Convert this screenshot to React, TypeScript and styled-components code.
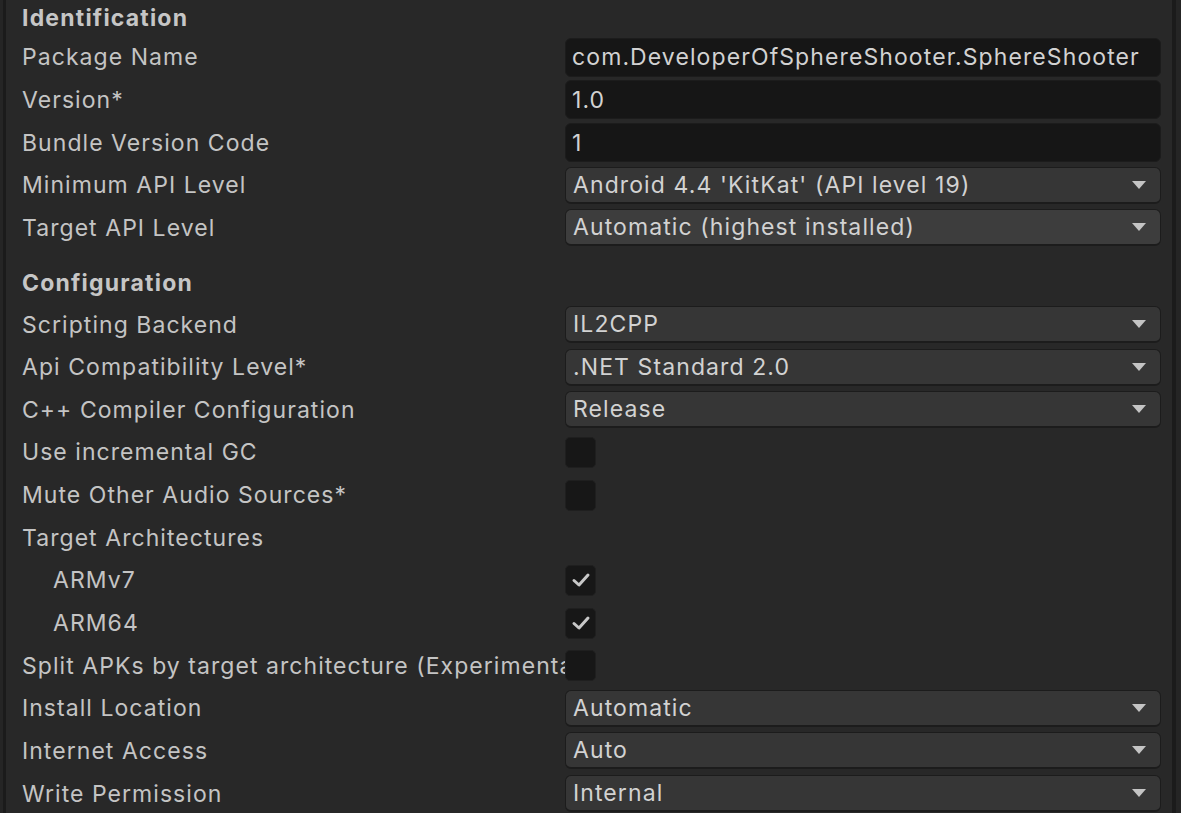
import React from 'react';
import styled, { createGlobalStyle } from 'styled-components';

const GlobalStyle = createGlobalStyle`
  html, body {
    margin: 0;
    padding: 0;
    background: #252525;
    overflow: hidden;
  }
  body {
    font-family: Inter, "Noto Sans", "Liberation Sans", sans-serif;
  }
`;

type Field =
  | { kind: 'header'; label: string }
  | { kind: 'text'; label: string; value: string }
  | { kind: 'select'; label: string; value: string; hover?: boolean }
  | { kind: 'check'; label: string; checked?: boolean; indent?: boolean }
  | { kind: 'label'; label: string };

const fields: Field[] = [
  { kind: 'header', label: 'Identification' },
  { kind: 'text', label: 'Package Name', value: 'com.DeveloperOfSphereShooter.SphereShooter' },
  { kind: 'text', label: 'Version*', value: '1.0' },
  { kind: 'text', label: 'Bundle Version Code', value: '1' },
  { kind: 'select', label: 'Minimum API Level', value: "Android 4.4 'KitKat' (API level 19)" },
  { kind: 'select', label: 'Target API Level', value: 'Automatic (highest installed)', hover: true },
  { kind: 'header', label: 'Configuration' },
  { kind: 'select', label: 'Scripting Backend', value: 'IL2CPP' },
  { kind: 'select', label: 'Api Compatibility Level*', value: '.NET Standard 2.0' },
  { kind: 'select', label: 'C++ Compiler Configuration', value: 'Release' },
  { kind: 'check', label: 'Use incremental GC' },
  { kind: 'check', label: 'Mute Other Audio Sources*' },
  { kind: 'label', label: 'Target Architectures' },
  { kind: 'check', label: 'ARMv7', checked: true, indent: true },
  { kind: 'check', label: 'ARM64', checked: true, indent: true },
  { kind: 'check', label: 'Split APKs by target architecture (Experimental)' },
  { kind: 'select', label: 'Install Location', value: 'Automatic' },
  { kind: 'select', label: 'Internet Access', value: 'Auto' },
  { kind: 'select', label: 'Write Permission', value: 'Internal' },
];

const Arrow = () => (
  <svg width="16" height="10" viewBox="0 0 16 10">
    <path d="M1 1 H15 L8 9 Z" fill="#c4c4c4" />
  </svg>
);

const Check = () => (
  <svg width="22" height="22" viewBox="0 0 22 22">
    <path d="M4 11.5 L9 16 L18 6" fill="none" stroke="#c8c8c8" strokeWidth="3" strokeLinecap="round" strokeLinejoin="round" />
  </svg>
);

const App = () => {
  let headerCount = 0;
  return (
    <>
      <GlobalStyle />
      <Window>
        <LeftEdge />
        <Inspector>
          {fields.map((f, i) => {
            if (f.kind === 'header') {
              const first = headerCount++ === 0;
              return (
                <Header key={i} $first={first}>
                  {f.label}
                </Header>
              );
            }
            return (
              <Row key={i}>
                <Label $indent={f.kind === 'check' && f.indent}>{f.label}</Label>
                {f.kind === 'text' && (
                  <TextField>
                    <Value>{f.value}</Value>
                  </TextField>
                )}
                {f.kind === 'select' && (
                  <Select $hover={f.hover}>
                    <Value>{f.value}</Value>
                    <Arrow />
                  </Select>
                )}
                {f.kind === 'check' && <CheckBox>{f.checked && <Check />}</CheckBox>}
              </Row>
            );
          })}
        </Inspector>
        <RightEdge />
      </Window>
    </>
  );
};

const Window = styled.div`
  display: flex;
  width: 1181px;
  height: 813px;
  background: #252525;
  overflow: hidden;
`;

const LeftEdge = styled.div`
  width: 3px;
  margin-left: 3px;
  background: #1b1b1b;
  flex-shrink: 0;
`;

const RightEdge = styled.div`
  width: 4px;
  margin-right: 5px;
  background: #1b1b1b;
  flex-shrink: 0;
`;

const Inspector = styled.div`
  flex: 1;
  background: #282828;
  padding: 0 11px 0 16px;
  display: flex;
  flex-direction: column;
  min-width: 0;
`;

const Header = styled.div<{ $first?: boolean }>`
  height: ${(p) => (p.$first ? 36 : 40)}px;
  margin-top: ${(p) => (p.$first ? 0 : 14)}px;
  display: flex;
  align-items: center;
  font-size: 23px;
  font-weight: 700;
  letter-spacing: 1.2px;
  color: #c6c6c6;
  flex-shrink: 0;
`;

const Row = styled.div`
  display: grid;
  grid-template-columns: 543px 1fr;
  align-items: center;
  height: 42.65px;
  flex-shrink: 0;
`;

const Label = styled.div<{ $indent?: boolean }>`
  font-size: 23px;
  letter-spacing: 1.05px;
  color: #c4c4c4;
  white-space: nowrap;
  overflow: hidden;
  text-overflow: clip;
  padding-left: ${(p) => (p.$indent ? 31 : 0)}px;
`;

const Value = styled.span`
  font-size: 23px;
  letter-spacing: 1.1px;
  color: #d2d2d2;
  white-space: nowrap;
  overflow: hidden;
`;

const TextField = styled.div`
  height: 39px;
  border-radius: 6px;
  background: #161616;
  border: 1px solid #1c1c1c;
  box-sizing: border-box;
  display: flex;
  align-items: center;
  padding-left: 6px;
`;

const Select = styled.div<{ $hover?: boolean }>`
  height: 37px;
  border-radius: 6px;
  background: ${(p) => (p.$hover ? '#3d3d3d' : '#363636')};
  border: 1px solid #1c1c1c;
  border-bottom-width: 2px;
  box-sizing: border-box;
  display: flex;
  align-items: center;
  justify-content: space-between;
  padding: 0 13px 0 7px;
`;

const CheckBox = styled.div`
  width: 31px;
  height: 31px;
  border-radius: 5px;
  background: #171717;
  border: 1px solid #1f1f1f;
  box-sizing: border-box;
  display: flex;
  align-items: center;
  justify-content: center;
`;

export default App;
